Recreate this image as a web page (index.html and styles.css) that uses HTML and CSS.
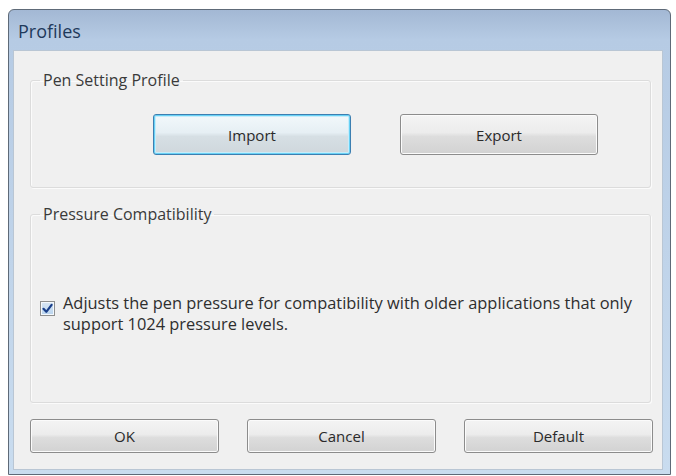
FILE: index.html
```html
<!DOCTYPE html>
<html>
<head>
<meta charset="utf-8">
<link rel="stylesheet" href="styles.css">
</head>
<body>
<div class="window">
  <div class="titlebar">Profiles</div>
  <div class="client">
    <fieldset class="group group-pen">
      <legend>Pen Setting Profile</legend>
      <div class="pen-buttons">
        <button class="btn btn-focus">Import</button>
        <button class="btn">Export</button>
      </div>
    </fieldset>
    <fieldset class="group group-pressure">
      <legend>Pressure Compatibility</legend>
      <label class="check">
        <span class="box"><svg width="11" height="11" viewBox="0 0 11 11"><path d="M1.5 5.8 L4.3 8.8 L9.6 1.8" fill="none" stroke="#1a3f8a" stroke-width="2.2" stroke-linejoin="round" stroke-linecap="round"/></svg></span>
        <span class="check-text">Adjusts the pen pressure for compatibility with older applications that only support 1024 pressure levels.</span>
      </label>
    </fieldset>
    <div class="footer">
      <button class="btn btn-foot">OK</button>
      <button class="btn btn-foot">Cancel</button>
      <button class="btn btn-foot">Default</button>
    </div>
  </div>
</div>
</body>
</html>
```
FILE: styles.css
```css
html, body {
  margin: 0;
  padding: 0;
  background: #ffffff;
}
body {
  padding: 9px 5px 0 8px;
  font-family: "Open Sans", "Noto Sans", sans-serif;
  color: #333;
}
.window {
  width: 661px;
  height: 464px;
  border: 1px solid #5e6a78;
  border-radius: 6px 6px 0 0;
  background: linear-gradient(#a3b8d4, #b6cbe4 30px, #c9dcef);
  display: flex;
  flex-direction: column;
  box-sizing: content-box;
}
.titlebar {
  height: 40px;
  padding-left: 9px;
  font-size: 18px;
  line-height: 42px;
  color: #1e395b;
  flex: none;
}
.client {
  margin: 0 7px 4px 4px;
  flex: 1;
  background: #f0f0f0;
  border: 1px solid #b9c6d4;
  display: flex;
  flex-direction: column;
  padding: 0 11px 0 16px;
}
.group {
  margin: 0;
  padding: 0;
  border: 1px solid #dcdcdc;
  box-shadow: inset 1px 1px 0 #fbfbfb, 1px 1px 0 #fbfbfb;
  border-radius: 3px;
  min-width: 0;
}
.group legend {
  font-size: 16px;
  padding: 0 3px;
  margin-left: 9px;
  color: #3a3a3a;
}
.group-pen {
  margin-top: 18px;
  height: 117px;
}
.pen-buttons {
  display: flex;
  gap: 49px;
  padding: 23px 0 0 122px;
}
.btn {
  font-family: inherit;
  font-size: 15px;
  color: #2a2a2a;
  border: 1px solid #8c8c8c;
  border-radius: 3px;
  background: linear-gradient(#f4f4f4 0%, #ececec 45%, #dddddd 55%, #d2d2d2 100%);
  box-shadow: inset 0 0 0 1px #fbfbfb;
  padding: 0;
}
.pen-buttons .btn {
  width: 198px;
  height: 41px;
}
.btn-focus {
  border: 1px solid #3c7fb1;
  box-shadow: inset 0 0 0 1px #68d1f5, inset 0 0 0 2px #c6ecfa;
  background: linear-gradient(#f2f8fb 0%, #e6eff4 45%, #d6dfe4 55%, #cfd7dc 100%);
}
.group-pressure {
  margin-top: 15px;
  height: 198px;
}
.check {
  display: flex;
  align-items: flex-start;
  padding: 67px 10px 0 9px;
}
.box {
  flex: none;
  width: 13px;
  height: 13px;
  border: 1px solid #8e8f8f;
  background: linear-gradient(#d8e6f4, #b9d4ee);
  box-shadow: inset 0 0 0 1px #f4f8fc;
  margin-top: 9px;
  margin-right: 8px;
  display: flex;
  align-items: center;
  justify-content: center;
}
.check-text {
  font-size: 16.4px;
  line-height: 21px;
  color: #2e2e2e;
}
.footer {
  display: flex;
  justify-content: space-between;
  margin: 16px -2px 0 0;
}
.btn-foot {
  width: 189px;
  height: 34px;
}
```
